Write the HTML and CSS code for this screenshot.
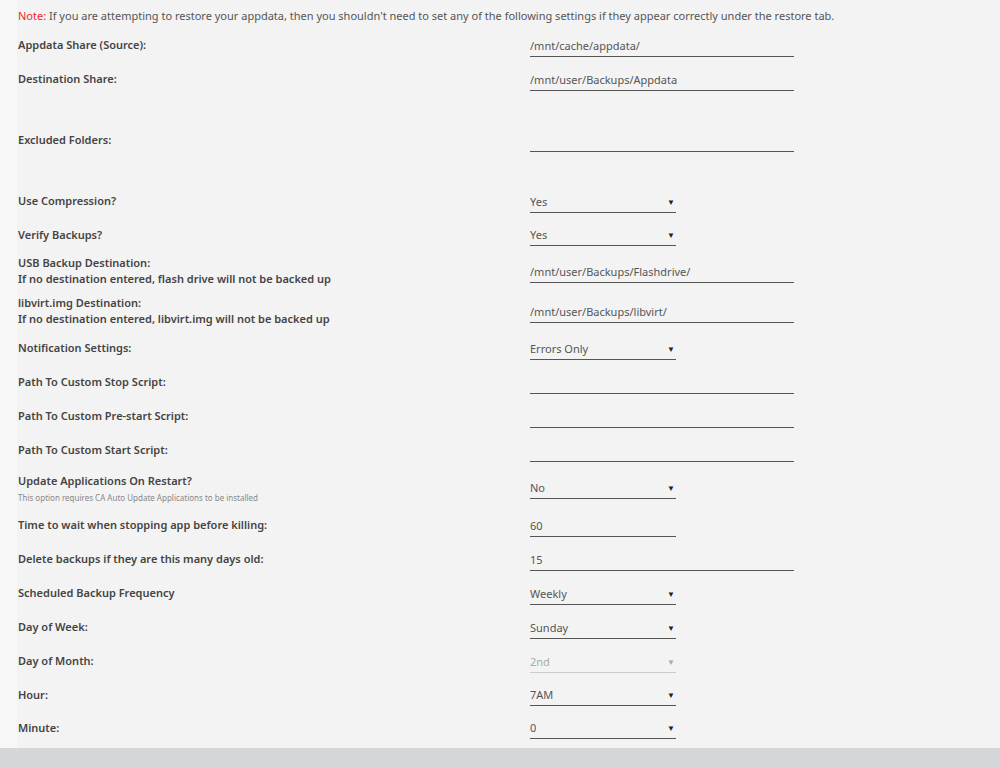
FILE: index.html
```html
<!DOCTYPE html>
<html>
<head>
    <meta charset="UTF-8">
    <link rel="stylesheet" href="styles.css">
</head>
<body>
    <div id="settings">
        <div class="note"><span class="note-tag">Note:</span> If you are attempting to restore your appdata, then you shouldn't need to set any of the following settings if they appear correctly under the restore tab.</div>

        <div class="row">
            <div class="label">Appdata Share (Source):</div>
            <div class="field"><input class="text" type="text" value="/mnt/cache/appdata/"></div>
        </div>
        <div class="row">
            <div class="label">Destination Share:</div>
            <div class="field"><input class="text" type="text" value="/mnt/user/Backups/Appdata"></div>
        </div>
        <div class="row excluded">
            <div class="label">Excluded Folders:</div>
            <div class="field"><input class="text" type="text" value=""></div>
        </div>
        <div class="row">
            <div class="label">Use Compression?</div>
            <div class="field"><div class="pick"><select><option>Yes</option><option>No</option></select></div></div>
        </div>
        <div class="row short">
            <div class="label">Verify Backups?</div>
            <div class="field"><div class="pick"><select><option>Yes</option><option>No</option></select></div></div>
        </div>
        <div class="row double">
            <div class="label">USB Backup Destination:<br>If no destination entered, flash drive will not be backed up</div>
            <div class="field"><input class="text" type="text" value="/mnt/user/Backups/Flashdrive/"></div>
        </div>
        <div class="row double">
            <div class="label">libvirt.img Destination:<br>If no destination entered, libvirt.img will not be backed up</div>
            <div class="field"><input class="text" type="text" value="/mnt/user/Backups/libvirt/"></div>
        </div>
        <div class="row">
            <div class="label">Notification Settings:</div>
            <div class="field"><div class="pick"><select><option>Errors Only</option><option>All</option><option>None</option></select></div></div>
        </div>
        <div class="row">
            <div class="label">Path To Custom Stop Script:</div>
            <div class="field"><input class="text" type="text" value=""></div>
        </div>
        <div class="row">
            <div class="label">Path To Custom Pre-start Script:</div>
            <div class="field"><input class="text" type="text" value=""></div>
        </div>
        <div class="row">
            <div class="label">Path To Custom Start Script:</div>
            <div class="field"><input class="text" type="text" value=""></div>
        </div>
        <div class="row double update">
            <div class="label">Update Applications On Restart?<br><span class="hint">This option requires CA Auto Update Applications to be installed</span></div>
            <div class="field"><div class="pick"><select><option>No</option><option>Yes</option></select></div></div>
        </div>
        <div class="row">
            <div class="label">Time to wait when stopping app before killing:</div>
            <div class="field"><input class="text narrow" type="text" value="60"></div>
        </div>
        <div class="row">
            <div class="label">Delete backups if they are this many days old:</div>
            <div class="field"><input class="text" type="text" value="15"></div>
        </div>
        <div class="row">
            <div class="label">Scheduled Backup Frequency</div>
            <div class="field"><div class="pick"><select><option>Weekly</option><option>Daily</option><option>Monthly</option></select></div></div>
        </div>
        <div class="row">
            <div class="label">Day of Week:</div>
            <div class="field"><div class="pick"><select><option>Sunday</option><option>Monday</option></select></div></div>
        </div>
        <div class="row">
            <div class="label">Day of Month:</div>
            <div class="field"><div class="pick off"><select disabled><option>2nd</option></select></div></div>
        </div>
        <div class="row short">
            <div class="label">Hour:</div>
            <div class="field"><div class="pick"><select><option>7AM</option></select></div></div>
        </div>
        <div class="row short">
            <div class="label">Minute:</div>
            <div class="field"><div class="pick"><select><option>0</option></select></div></div>
        </div>
    </div>
    <div id="footer"></div>
</body>
</html>
```

FILE: styles.css
```css
html, body {
    margin: 0;
    padding: 0;
}

body {
    background-color: #f8f8f8;
    font-family: "Noto Sans", "Open Sans", sans-serif;
    font-size: 11px;
    color: #4a4a4a;
}

#settings {
    margin-left: 17px;
    padding-left: 1px;
    padding-bottom: 4px;
    background-color: #f3f3f3;
}

.note {
    height: 28px;
    line-height: 32px;
    color: #555555;
}

.note-tag {
    color: #f0262c;
}

.row {
    display: flex;
    align-items: center;
    height: 34px;
}

.row.short {
    height: 33px;
}

.row.double {
    height: 40px;
}

.row.update {
    height: 41px;
}

.row.update .label {
    padding-top: 3px;
}

.row.excluded {
    height: 88px;
}

.label {
    flex: 0 0 512px;
    font-weight: 600;
    line-height: 16px;
    color: #444444;
}

.hint {
    font-size: 8px;
    font-weight: normal;
    color: #888888;
}

.field {
    flex: 1 1 auto;
    padding-top: 1px;
}

.text, .pick select {
    box-sizing: border-box;
    height: 22px;
    margin: 0;
    padding: 0;
    border: none;
    border-bottom: 1px solid #555555;
    border-radius: 0;
    background: transparent;
    font-family: "Noto Sans", "Open Sans", sans-serif;
    font-size: 11px;
    color: #555555;
    outline: none;
}

.text {
    width: 264px;
}

.text.narrow {
    width: 146px;
}

.pick {
    position: relative;
    width: 146px;
}

.pick select {
    width: 146px;
    -webkit-appearance: none;
    appearance: none;
}

/* drop-down arrow sits over the select's right edge */
.pick::after {
    content: "\25BC";
    position: absolute;
    right: 1px;
    top: 5px;
    font-size: 8px;
    color: #222222;
    pointer-events: none;
}

.pick.off select {
    color: #aaaaaa;
    border-bottom-color: #cccccc;
    opacity: 1;
}

.pick.off::after {
    color: #aaaaaa;
}

#footer {
    height: 20px;
    background-color: #d5d6d7;
}
```
